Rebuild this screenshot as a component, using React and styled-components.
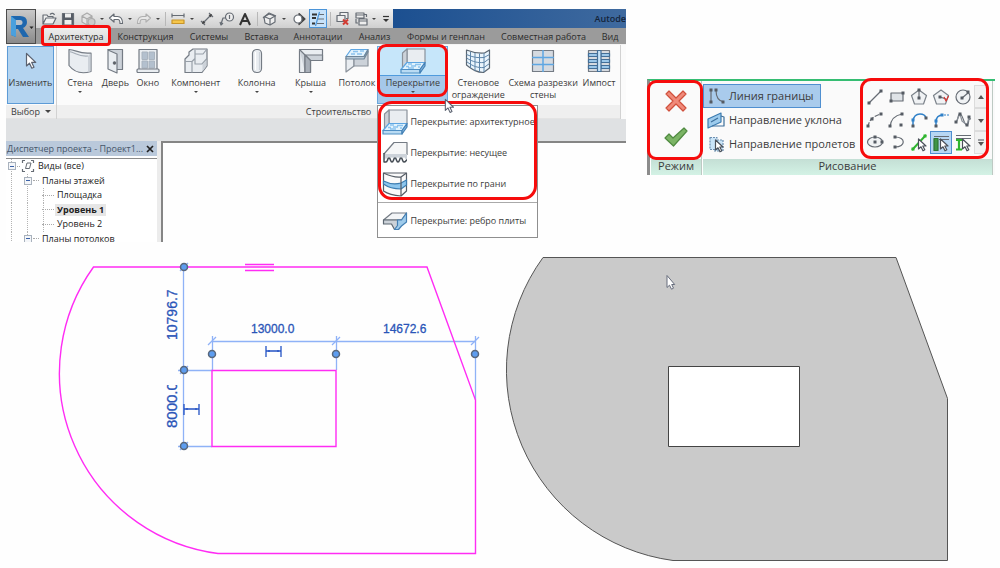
import React from "react";
import styled, { createGlobalStyle, css } from "styled-components";

const GlobalStyle = createGlobalStyle`
  * { box-sizing: border-box; }
  body { margin: 0; background: #fefefe; color: #3c3c3c; font-family: "Open Sans", "Noto Sans", sans-serif; font-size: 10px; }
  button { font: inherit; color: inherit; margin: 0; padding: 0; border: 0; background: none; }
  ul { list-style: none; margin: 0; padding: 0; }
  svg { display: block; }
`;

const Page = styled.main`
  padding-top: 9px;
  overflow: hidden;
`;
const TopRow = styled.div`
  display: grid;
  grid-template-columns: minmax(0, 620fr) minmax(0, 353fr);
  gap: 21px;
  padding-left: 6px;
  align-items: start;
`;
const Drawings = styled.div`
  display: grid;
  grid-template-columns: 1fr 1fr;
  svg { width: 100%; height: auto; }
`;

/* A hand-drawn looking frame that marks a part of the interface. */
const mark = css`
  content: "";
  position: absolute;
  z-index: 5;
  border: 3px solid #f60c0c;
  pointer-events: none;
`;

/* ---------- main window ---------- */
const Window = styled.section`
  position: relative;
`;
const Header = styled.header`
  display: grid;
  grid-template-columns: 30px minmax(0, 1fr);
`;
const AppButton = styled.button`
  display: flex;
  align-items: center;
  justify-content: center;
  border: 1px solid #4c4c4c;
  background: linear-gradient(#c9c9c9, #8a8a8a);
`;
const TitleBar = styled.div`
  display: flex;
  height: 19px;
  background: linear-gradient(90deg, #24548c, #1b4f90 60%, #3f6a9f);
`;
const QuickBar = styled.div`
  display: flex;
  flex: none;
  padding-left: 4px;
  background: linear-gradient(#f0f0f0, #cfcfcf);
`;
const QuickButton = styled.button`
  display: flex;
  align-items: center;
  justify-content: center;
  width: ${(p) => p.$w}px;
  ${(p) => p.$on && css`background: #c7e2fa; border: 1px solid #4b94d8;`}
`;
const QuickGap = styled.span`
  width: ${(p) => p.$w}px;
  background: linear-gradient(#b8b8b8, #b8b8b8) no-repeat center / 1px 14px;
`;
const AppTitle = styled.span`
  flex: 1;
  min-width: 0;
  overflow: hidden;
  text-align: right;
  font-size: 9px;
  line-height: 19px;
  font-weight: 600;
  color: #14243a;
`;
const Tabs = styled.nav`
  display: flex;
  height: 16px;
  padding-left: 6px;
  background: #9b9b9b;
`;
const Tab = styled.button`
  position: relative;
  flex: ${(p) => p.$w} 1 0;
  min-width: 0;
  white-space: nowrap;
  font-size: 9px;
  line-height: 18px;
  color: #2c2c2c;
  ${(p) => p.$on && css`
    background: linear-gradient(#ededed, #d8d8d8);
    &::after { ${mark} inset: -3px -1px -2px; border-radius: 4px; }
  `}
`;

const Ribbon = styled.div`
  display: grid;
  grid-template-columns: 51px minmax(0, 1fr);
  padding-right: 5px;
  background: #fbfbfb;
  border-top: 1px solid #f4f4f4;
`;
const Panel = styled.div`
  border-right: 1px solid #d2d2d2;
`;
const PanelBody = styled.div`
  display: flex;
  height: 60px;
  padding: 1px 0 1px ${(p) => p.$left}px;
`;
const PanelLabel = styled.div`
  display: flex;
  align-items: center;
  justify-content: center;
  gap: 5px;
  height: 14px;
  background: #efefef;
  border-bottom: 1px solid #e4e4e4;
  font-size: 9px;
`;
const ModifyButton = styled.button`
  flex: 1;
  display: flex;
  flex-direction: column;
  align-items: center;
  gap: 4px;
  margin-right: 2px;
  padding-top: 5px;
  border: 1px solid #5d9bd6;
  background: #b4d4f0;
  font-size: 9px;
  line-height: 12px;
`;
const ToolSlot = styled.div`
  position: relative;
  flex: ${(p) => p.$w} 1 0;
  min-width: 0;
  display: flex;
`;
const ToolButton = styled.button`
  flex: 1;
  min-width: 0;
  display: flex;
  flex-direction: column;
  align-items: center;
  padding-top: 2px;
  white-space: nowrap;
  font-size: 9px;
  line-height: 12px;
  ${(p) => p.$open && css`
    background: linear-gradient(#c6e6fa 0 29px, #4f9bdd 29px 30px, #a5c8ea 30px);
    box-shadow: inset 0 0 0 1px #6aa7dc;
    &::after { ${mark} inset: -2px 0 7px; border-radius: 9px; }
  `}
`;
const ToolText = styled.span`
  margin-top: 3px;
  text-align: center;
`;
const Arrow = styled.span`
  width: 0;
  border: ${(p) => p.$s || 2}px solid transparent;
  border-top-color: #444;
  border-bottom-width: 0;
`;
const ToolArrow = styled(Arrow)`
  margin-top: 2px;
`;
const Menu = styled.ul`
  position: absolute;
  z-index: 4;
  top: 59px;
  left: 0;
  width: 161px;
  padding-bottom: 1px;
  background: #fff;
  border: 1px solid #8f8f8f;
  &::after { ${mark} inset: -5px 0 37px; border-radius: 14px; }
`;
const MenuRow = styled.li`
  ${(p) => p.$split && css`border-top: 1px solid #aaa; margin-top: 3px; padding-top: 2px;`}
`;
const MenuButton = styled.button`
  display: flex;
  align-items: center;
  gap: 2px;
  width: 100%;
  height: 31px;
  padding-left: 4px;
  white-space: nowrap;
  font-size: 9px;
`;
const Pointer = styled.span`
  position: absolute;
  z-index: 6;
  left: 67px;
  top: 52px;
`;
const OptionsBar = styled.div`
  height: 22px;
  background: #dfe1e3;
`;

const Workspace = styled.div`
  display: grid;
  grid-template-columns: 151px minmax(0, 1fr);
  gap: 4px;
  max-height: 101px;
  overflow: hidden;
  background: linear-gradient(90deg, #ececec 155px, #fff 155px);
`;
const View = styled.div`
  border: solid #858585;
  border-width: 2px 0 0 2px;
  background: #fefefe;
`;
const Browser = styled.aside`
  background: #fff;
`;
const BrowserTitle = styled.div`
  display: flex;
  align-items: center;
  justify-content: space-between;
  height: 15px;
  padding: 0 3px 0 1px;
  background: #bac9db;
  color: #46566a;
  white-space: nowrap;
  font-size: 9px;
`;
const Tree = styled.ul`
  display: flex;
  flex-direction: column;
  height: 88px;
  margin-top: 2px;
  border-top: 1px solid #8a8a8a;
`;
const trunk = (x) => `repeating-linear-gradient(#b4b4b4 0 1px, transparent 1px 2px) no-repeat ${x}px 0 / 1px 100%`;
const Node = styled.li`
  flex: 1;
  display: flex;
  align-items: center;
  gap: 1px;
  padding-left: ${(p) => [2, 18, 36][p.$level]}px;
  font-size: 9px;
  line-height: 12px;
  white-space: nowrap;
  color: #222;
  background: ${(p) => [5, 21, 37].slice(0, p.$level + 1).map(trunk).join(", ")};
`;
const Toggle = styled.button`
  flex: none;
  width: 8px;
  height: 8px;
  border: 1px solid #a9b2bd;
  background: linear-gradient(#3b62a8, #3b62a8) no-repeat center / 4px 1px #f4f6f9;
`;
const Dots = styled.span`
  width: ${(p) => p.$w}px;
  border-top: 1px dotted #aaa;
`;
const NodeName = styled.span`
  padding: 0 2px;
  ${(p) => p.$on && css`background: #e6e6e6; font-weight: 700;`}
`;

/* ---------- sketch panel ---------- */
const Sketch = styled.section`
  display: grid;
  grid-template-columns: 52px minmax(0, 1fr);
  margin-top: 70px;
  margin-right: 5px;
  padding-right: 2px;
  border-top: 2px solid #35bd72;
  border-left: 3px solid #8c8c8c;
  background: #fafafa;
`;
const SketchPanel = styled.div`
  position: relative;
  min-width: 0;
  border-right: 1px solid #bdc9c3;
  ${(p) => p.$marked && css`&::after { ${mark} inset: -1px -2px 15px -3px; border-radius: 9px; }`}
`;
const SketchBody = styled.div`
  display: flex;
  height: 78px;
  justify-content: space-between;
`;
const ModeBody = styled.div`
  display: flex;
  flex-direction: column;
  align-items: center;
  justify-content: center;
  gap: 14px;
  height: 78px;
  padding-bottom: 4px;
`;
const SketchLabel = styled.div`
  height: 16px;
  border-left: 1px solid #fff;
  background: linear-gradient(#c4dfd5, #d3f2e5);
  text-align: center;
  font-size: 11px;
  line-height: 14px;
`;
const Kinds = styled.div`
  flex: 1;
  min-width: 0;
  overflow: hidden;
  padding: 3px 0 0 1px;
`;
const Kind = styled.button`
  display: flex;
  align-items: center;
  gap: 4px;
  height: 24px;
  width: ${(p) => (p.$on ? "118px" : "auto")};
  padding-left: 3px;
  white-space: nowrap;
  font-size: 11px;
  line-height: 20px;
  border: 1px solid ${(p) => (p.$on ? "#4f8fd0" : "transparent")};
  background: ${(p) => (p.$on ? "#a9cbec" : "transparent")};
`;
const Gallery = styled.div`
  position: relative;
  flex: none;
  display: grid;
  grid-template-columns: repeat(5, 22px) 13px;
  grid-template-rows: repeat(3, 23px);
  padding: 4px 5px 0 4px;
  &::after { ${mark} inset: -3px 3px 0 0; border-radius: 11px; }
`;
const Draw = styled.button`
  display: flex;
  align-items: center;
  justify-content: center;
  ${(p) => p.$on && css`background: #b7d7f3; box-shadow: inset 0 0 0 1px #4f8fd0;`}
`;
const Scroll = styled.button`
  display: flex;
  align-items: center;
  justify-content: center;
  border: 1px solid #dcdcdc;
  background: #f1f1f1;
`;

/* ---------- icons ---------- */
const Icon = ({ w = 16, h = w, vw = w, vh = h, children }) => (
  <svg width={w} height={h} viewBox={`0 0 ${vw} ${vh}`} fill="none" stroke="#666c74" strokeWidth="1.2" strokeLinejoin="round" aria-hidden="true">
    {children}
  </svg>
);
const Big = ({ children }) => <Icon w={26}>{children}</Icon>;
const LIGHT = "#e9edf1";
const MID = "#ccd2d9";
const BLUE = "#5ea6e2";
const SKY = "#c9e4f8";

const CursorIcon = ({ size = 18 }) => (
  <Icon w={(size * 2) / 3} h={size} vw={12} vh={18}>
    <path d="M1.500 1.500V14l3-2.800 2.300 5 2.200-1-2.300-4.800h4z" fill="#fff" stroke="#5b6270" />
  </Icon>
);

const FloorShape = () => (
  <>
    <path d="M7 1h18v14H7z" fill={LIGHT} stroke="#8a929b" />
    <path d="M2.500 5 7 1v14l-4.500 6z" fill={MID} stroke="#8a929b" />
    <path d="M1 21.500 7 14.500h18l-5 7z" fill="#e2f3fd" stroke={BLUE} />
    <path d="M8 16h4M15 16.500h6M6 18.500h3M11 18h5M8 20h6M18 19h2" stroke="#8cc3ee" strokeWidth="1.400" />
    <path d="M1 21.500h19V25H1z" fill="#b9dbf3" stroke="#4f8fc4" />
    <path d="m20 21.500 5-7V18l-5 7z" fill="#7fb2dc" stroke="#4580b4" />
  </>
);

const icons = {
  wall: <Big><path d="M2 1.500c7 0 10 5 22 3.500v18.500c-10 3-17 .5-22-6z" fill={LIGHT} stroke="#747b84" /><path d="M2 3.500c7 1 9 5.500 19 4.500" stroke="#a5adb6" /><path d="M21 8v16l2.500-.7V5.500z" fill={MID} stroke="none" /></Big>,
  door: <Big><path d="M5.500 1.500h15v20h-6" fill={MID} stroke="#747b84" /><path d="m6 2 9 4v19l-9-4z" fill={LIGHT} stroke="#747b84" /><circle cx="12.500" cy="15" r="1.200" fill="#555" /></Big>,
  window: <Big><rect x="4" y="1.500" width="18" height="20" fill={LIGHT} stroke="#747b84" /><path d="M7 4h5.500v7.500H7zM14 4h5.500v7.500H14zM7 13h5.500v7H7zM14 13h5.500v7H14z" fill="#b3c0ce" stroke="#aab4bf" strokeWidth="1" /><rect x="2" y="21" width="22" height="3.500" rx="1" fill={LIGHT} stroke="#747b84" /></Big>,
  component: <Big><path d="m2 11 4-4V4l4-3h14v17l-5 6.500H2z" fill={LIGHT} stroke="#747b84" /><path d="M2 13.500h7v11M9 13.500l3-3M12 6v10h7l5-5.500M12 6h8l4-5M12 6V2" stroke="#98a0a9" /><path d="m19.500 16 4-4v6l-4 5.500z" fill={MID} stroke="none" /></Big>,
  column: <Big><rect x="8.500" y="1.500" width="9" height="23" rx="4" fill={LIGHT} stroke="#747b84" /><path d="M11.500 4v18" stroke="#fff" /><path d="M15.500 4v18" stroke={MID} /></Big>,
  roof: <Big><path d="M1.500 1.500h23v11h-12v12h-11z" fill={LIGHT} stroke="#747b84" /><path d="m1.500 1.500 5.500 5.500h17.500v5.500h-12L7 7v17.500" fill={MID} stroke="#747b84" /><path d="m7 7 5.500 5.500v12H7z" fill="#a9b0b9" stroke="#747b84" /></Big>,
  ceiling: <Big><path d="M2 10v14l8-6V10z" fill={LIGHT} stroke="#8a929b" /><path d="M10 10v8h14V3z" fill={MID} stroke="#8a929b" /><path d="M2 8.500 7 1.500h17l-4 7z" fill="#e2f3fd" stroke={BLUE} /><path d="M9 3.500h5M16 3h4M7 6h4M13 6h5" stroke="#8cc3ee" strokeWidth="1.400" /><path d="M2 8.500V11h18l4-7V1.500l-4 7z" fill="#b7c8d6" stroke="#6f8699" /></Big>,
  floor: <Big><FloorShape /></Big>,
  curtain: <Big><path d="M1.500 2c6 2.500 12 3.500 18 3l5-3v18l-6 4.500C12 24.500 8 22 1.500 17z" fill="#eaf5fd" stroke="#5b6773" /><path d="M5.500 4v16M10 5v18M14.500 5.500v18.500M19 5v19M1.500 6.500C8 9.500 13 10 19 9.500l5.500-3M1.500 10C8 14 13 15 19 14.500l5.500-4M1.500 13.500C8 18.500 13 20 19 19.500l5.500-4" stroke="#5f86aa" strokeWidth="1" /></Big>,
  grid: <Big><rect x="2.500" y="2.500" width="21" height="21" fill="#d5dae0" stroke="#747b84" /><path d="M13 2v22M2 9.500h22M2 16.500h22" stroke={BLUE} strokeWidth="1.500" /></Big>,
  mullion: <Big><path d="M2.500 2.500h21v21h-21z" fill="#d5dae0" stroke="#747b84" /><path d="M2.500 5.500h9v3h-9zM15 5.500h8.500v3H15zM2.500 11.500h9v3h-9zM15 11.500h8.500v3H15zM2.500 17.500h9v3h-9zM15 17.500h8.500v3H15z" fill="#9cc8ea" stroke="#436f98" /><path d="M11.500 2.500h3.500v21h-3.500z" fill={SKY} stroke="#436f98" /></Big>,
  structural: <Icon w={26}><path d="M2 14 12 2.500h13V15" fill="#f5f6f7" stroke="#747b84" /><path d="M2 14h23v7l-3-4-3 4-3-4-3 4-3-4-3 4-3-3-2 3z" fill={MID} stroke="none" /><path d="M2 13v9h2c2 0 1-4 3-4s1 4 3 4 1-4 3-4 1 4 3 4 1-4 3-4 1 4 3 4 2-2 3-2" stroke="#434a52" strokeWidth="1.400" /></Icon>,
  face: <Icon w={26}><path d="M1.500 2H24.500v18L19 25C12 24.500 6 23 1.500 20z" fill="#fafafa" stroke="#565d66" /><path d="M1.500 10c6 3 12 3.500 17.500 2l5.500-3v5l-5.500 4c-7 0-12-1-17.500-5z" fill="#8dc6ee" stroke="#3c7cb0" /><path d="M1.500 2c6 3 12 4.500 17.500 4l5.500-4M19 6v19" stroke="#565d66" /></Icon>,
  edge: <Icon w={26}><path d="M1.500 12 10 5h14.500l-5 7z" fill="#f3f5f7" stroke="#747b84" /><path d="M1.500 12v4h8l3 5.500h4V17l3-5z" fill={MID} stroke="#5d6872" /><path d="m19.500 12 5-7v9l-5 4-3 3.500h-4l3-4V12z" fill="#9fcbeb" stroke="#4580b4" /></Icon>,

  open: <Icon w={16}><path d="M2 13V4h4l1 1.500h5V7M2 13l3-6h10l-3 6z" fill="#f1f1f1" /><path d="M9 3.500c2-2 4-1 4.500.5" /></Icon>,
  save: <Icon w={14}><path d="M1.500 1.500h11v11h-11z" fill="#565c65" /><path d="M4 1.500h6v4H4zM3.500 8h7v4.500h-7z" fill="#eee" stroke="none" /></Icon>,
  cloud: <Icon w={16}><g stroke="#aaa"><path d="m2 5 5-3 5 3v6l-5 3-5-3zM2 5l5 3 5-3M7 8v6" fill="#e4e4e4" /><circle cx="11.500" cy="11" r="3.500" fill="#ccc" /></g></Icon>,
  undo: <Icon w={16}><path d="M6 3 1.500 7 6 11V8.500h4q2 0 2 4h2.500q0-7-5-7H6z" fill="#fff" /></Icon>,
  redo: <Icon w={16}><path d="M10 3l4.500 4L10 11V8.500H6q-2 0-2 4H1.500q0-7 5-7H10z" fill="#e8e8e8" stroke="#b0b0b0" /></Icon>,
  measure: <Icon w={16}><path d="M2 4.500h12M2 2.500v4M14 2.500v4" /><path d="M2 9h12v3.500H2z" fill="#f5c64b" stroke="#c8952a" /></Icon>,
  align: <Icon w={16}><path d="m3.500 12.500 9-9M2 10l4 4M10 2l4 4" /><path d="M3 13l3.500-1-2.500-2.500zM13 3l-3.500 1L12 6.500z" fill="#444" stroke="none" /></Icon>,
  tag: <Icon w={16}><circle cx="10.500" cy="6" r="4" fill="#eee" /><path d="M10.500 4v4M6.500 7H4l-2 6" /><path d="m1 11 1 3 2-2" /></Icon>,
  textA: <Icon w={14}><path d="M2 13 7 2l5 11M4 9h6" stroke="#333" strokeWidth="2" /></Icon>,
  home3d: <Icon w={16}><path d="m2 6 5-3 6 2v6l-5 3-5-2z" fill="#eee" /><path d="m1 7 6-5 7 3M8 14V8l5-3M3 6l5 2" /></Icon>,
  section: <Icon w={16}><path d="m8 2.500 6 5.500-6 5.500z" fill="#444" stroke="#444" /><circle cx="7" cy="8" r="4" fill="#fff" /></Icon>,
  thin: <Icon w={16}><path d="M2 3.500h5M2 7h4M2 12.500h3" stroke="#333" strokeWidth="2.200" /><path d="M9 3.500h5M8 8h6M7 12.500h7" /><path d="M9.500 1 5.500 15" stroke="#4b94d8" /></Icon>,
  closeHidden: <Icon w={16}><path d="M5 4V1.500h8v6h-2M2 4.500h8v6H2z" fill="#eee" /><path d="m8 8.500 5 5M13 8.500l-5 5" stroke="#d23b32" strokeWidth="2" /></Icon>,
  switchWin: <Icon w={16}><path d="M3 2h8v5H3zM6 8h8v6H6z" fill="#eee" /><path d="M11 3.500h2.500V6M3 8v4h2M3 4h8M6 10h8" /></Icon>,
};

const dot = (x, y, c = "#555b63") => <rect x={x - 1.5} y={y - 1.5} width="3" height="3" fill={c} stroke="none" />;
const cursorMini = <path d="M8.500 5v10l2.500-2.200 2 4 1.800-1-2-3.800H16z" fill="#fff" stroke="#4b515a" />;
const draws = [
  ["Линия", <Icon w={18}><path d="M3 15 15 3" />{dot(3, 15)}{dot(15, 3)}</Icon>],
  ["Прямоугольник", <Icon w={18}><rect x="3" y="5" width="12" height="8" fill="#dfe3e7" />{dot(3, 13)}{dot(15, 5)}</Icon>],
  ["Вписанный многоугольник", <Icon w={18}><path d="m9 2 7.500 5.500-3 8.500h-9l-3-8.500z" fill="#f0f2f4" stroke="#7b828a" /><path d="M9 2v8" />{dot(9, 2)}{dot(9, 10)}</Icon>],
  ["Описанный многоугольник", <Icon w={18}><path d="m9 2 7.500 5.500-3 8.500h-9l-3-8.500z" fill="#f0f2f4" stroke="#7b828a" /><path d="m8 9 6 2" />{dot(8, 9)}<path d="m12 9 2 4 2.500-5" stroke="#d8322c" /></Icon>],
  ["Окружность", <Icon w={18}><circle cx="9" cy="9" r="7" fill="#f0f2f4" /><path d="m8 10 6-5" />{dot(8, 10)}{dot(14, 4)}</Icon>],
  ["Дуга по трем точкам", <Icon w={18}><path d="M2 16Q3 6 15 3" strokeDasharray="5 1.500" />{dot(2, 15)}{dot(6, 8)}{dot(15, 3)}</Icon>],
  ["Дуга из центра", <Icon w={18}><path d="M2 16Q3 5 14 3" />{dot(2, 15)}{dot(14, 3)}{dot(13, 14)}</Icon>],
  ["Касательная дуга", <Icon w={18}><path d="M3 15V10Q4 3 10 3q5 0 6 4" stroke="#2f80c8" strokeWidth="1.500" />{dot(3, 15)}{dot(3, 9, "#2f80c8")}{dot(16, 7)}</Icon>],
  ["Сопряжение", <Icon w={18}><path d="M4 16v-5q0-7 7-7" stroke="#2f80c8" strokeWidth="1.500" /><path d="M12 4h5" stroke="#2f80c8" strokeDasharray="2 1" />{dot(4, 15)}{dot(4, 10, "#2f80c8")}{dot(10, 4, "#2f80c8")}</Icon>],
  ["Сплайн", <Icon w={18}><path d="M1 11C5 11 3 3 6 3s4 12 7 11 0-7 4-6" /><path d="m3 9 3-6 2 7 5 4 2-8" stroke="#8b9199" />{dot(6, 3)}{dot(13, 14)}{dot(15, 6)}{dot(2, 11)}</Icon>],
  ["Эллипс", <Icon w={18}><ellipse cx="9" cy="8" rx="7.500" ry="5" fill="#f0f2f4" />{dot(9, 8)}{dot(9, 3)}{dot(16, 8)}</Icon>],
  ["Часть эллипса", <Icon w={18}><path d="M7 3c11 0 11 10 0 10" />{dot(7, 3)}{dot(7, 13)}</Icon>],
  ["Выбрать линии", <Icon w={18}><path d="M2 16 16 1" stroke="#2fb52f" strokeWidth="2" />{dot(3, 15, "#2fb52f")}{dot(15, 2, "#2fb52f")}{cursorMini}</Icon>],
  ["Выбрать стены", <Icon w={18}><path d="M2 2.500h15M7 5.500h10" /><path d="M2 4.500h4v12H2z" fill="#3f9647" stroke="#2f7636" />{cursorMini}</Icon>],
  ["Выбрать опоры", <Icon w={18}><path d="M2 1.500h15M2 4.500h15" /><path d="M2 6h6M2 15.500h6M5 6v9" stroke="#2fb52f" strokeWidth="2.200" />{cursorMini}</Icon>],
];

const quick = [
  ["b", 18, "open", "Открыть"], ["b", 20, "save", "Сохранить"], ["b", 20, "cloud", "Синхронизация"], ["a", 8],
  ["b", 20, "undo", "Отменить"], ["a", 8], ["b", 20, "redo", "Повторить"], ["a", 8], ["s", 6],
  ["b", 20, "measure", "Измерить"], ["a", 8], ["b", 21, "align", "Размер"], ["b", 19, "tag", "Марка"], ["b", 18, "textA", "Текст"], ["s", 6],
  ["b", 20, "home3d", "3D вид"], ["a", 8], ["b", 21, "section", "Разрез"], ["b", 18, "thin", "Тонкие линии", true], ["s", 6],
  ["b", 19, "closeHidden", "Закрыть скрытые окна"], ["b", 18, "switchWin", "Переключить окна"], ["a", 8], ["c", 15],
];

const tabs = [
  ["Архитектура", 68], ["Конструкция", 71], ["Системы", 56], ["Вставка", 49], ["Аннотации", 64],
  ["Анализ", 49], ["Формы и генплан", 94], ["Совместная работа", 101], ["Вид", 32],
];

const tools = [
  ["Стена", 36, "wall", true], ["Дверь", 35, "door"], ["Окно", 30, "window"], ["Компонент", 66, "component", true],
  ["Колонна", 56, "column", true], ["Крыша", 52, "roof", true], ["Потолок", 41, "ceiling"], ["Перекрытие", 71, "floor", true],
  ["Стеновое\nограждение", 60, "curtain"], ["Схема разрезки\nстены", 70, "grid"], ["Импост", 42, "mullion"],
];

const menu = [
  ["Перекрытие: архитектурное", "floor"], ["Перекрытие: несущее", "structural"],
  ["Перекрытие по грани", "face"], ["Перекрытие: ребро плиты", "edge", true],
];

function QuickItem({ item: [kind, w, icon, label, on] }) {
  if (kind === "s") return <QuickGap $w={w} />;
  if (kind === "a") return <QuickButton $w={w} aria-label="Список"><Arrow /></QuickButton>;
  if (kind === "c")
    return <QuickButton $w={w} aria-label="Настройка панели"><Icon w={8}><path d="M1 1.500h6" stroke="#333" /><path d="M1 4h6L4 7z" fill="#333" stroke="none" /></Icon></QuickButton>;
  return <QuickButton $w={w} $on={on} aria-label={label}>{icons[icon]}</QuickButton>;
}

function FloorMenu() {
  return (
    <Menu>
      {menu.map(([name, icon, split]) => (
        <MenuRow key={name} $split={split}><MenuButton>{icons[icon]}{name}</MenuButton></MenuRow>
      ))}
    </Menu>
  );
}

function ProjectBrowser() {
  return (
    <Browser>
      <BrowserTitle>
        Диспетчер проекта - Проект1...
        <button aria-label="Закрыть"><Icon w={8}><path d="m1 1 6 6M7 1 1 7" stroke="#222" strokeWidth="1.700" /></Icon></button>
      </BrowserTitle>
      <Tree>
        <Node $level={0}><Toggle aria-label="Свернуть" /><Dots $w={3} /><Icon w={14}><path d="M4 1.500H1.500V4M10 1.500h2.500V4M4 12.500H1.500V10M10 12.500h2.500V10" /><path d="M6 4h4l-1.500 5.500H4.500z" strokeWidth="1" /></Icon><NodeName>Виды (все)</NodeName></Node>
        <Node $level={1}><Toggle aria-label="Свернуть" /><Dots $w={6} /><NodeName>Планы этажей</NodeName></Node>
        <Node $level={2}><Dots $w={12} /><NodeName>Площадка</NodeName></Node>
        <Node $level={2}><Dots $w={12} /><NodeName $on>Уровень 1</NodeName></Node>
        <Node $level={2}><Dots $w={12} /><NodeName>Уровень 2</NodeName></Node>
        <Node $level={1}><Toggle aria-label="Свернуть" /><Dots $w={6} /><NodeName>Планы потолков</NodeName></Node>
      </Tree>
    </Browser>
  );
}

function MainWindow() {
  return (
    <Window>
      <Header>
        <AppButton aria-label="Меню приложения">
          <Icon w={28} h={30}>
            <path d="M4 4h9q7 0 7 6 0 4-4 6l6 9h-6l-5-8H9v8l-5-2z" fill="#1e67ae" stroke="none" />
            <path d="M9 8h4q2.500 0 2.500 2.500T13 13H9z" fill="#b9c0c8" stroke="none" />
            <path d="m4 4 5 4v17l-5-2z" fill="#4aa0dd" stroke="none" />
            <path d="M22.500 14.500h4l-2 2.500z" fill="#222" stroke="none" />
          </Icon>
        </AppButton>
        <div>
          <TitleBar>
            <QuickBar>{quick.map((q, i) => <QuickItem key={i} item={q} />)}</QuickBar>
            <AppTitle>Autode</AppTitle>
          </TitleBar>
          <Tabs>{tabs.map(([name, w], i) => <Tab key={name} $w={w} $on={i === 0}>{name}</Tab>)}</Tabs>
        </div>
      </Header>
      <Ribbon>
        <Panel>
          <PanelBody $left={1}><ModifyButton><CursorIcon /><ToolText>Изменить</ToolText></ModifyButton></PanelBody>
          <PanelLabel>Выбор <Arrow $s={3} /></PanelLabel>
        </Panel>
        <Panel>
          <PanelBody $left={5}>
            {tools.map(([name, w, icon, drop]) => {
              const open = icon === "floor";
              return (
                <ToolSlot key={name} $w={w}>
                  <ToolButton $open={open}>
                    {icons[icon]}
                    <ToolText>{name.split("\n").map((line) => <div key={line}>{line}</div>)}</ToolText>
                    {drop && <ToolArrow />}
                  </ToolButton>
                  {open && <><FloorMenu /><Pointer><CursorIcon size={16} /></Pointer></>}
                </ToolSlot>
              );
            })}
          </PanelBody>
          <PanelLabel>Строительство</PanelLabel>
        </Panel>
      </Ribbon>
      <OptionsBar />
      <Workspace><ProjectBrowser /><View /></Workspace>
    </Window>
  );
}

function SketchTools() {
  return (
    <Sketch>
      <SketchPanel $marked>
        <ModeBody>
          <button aria-label="Отменить"><Icon w={24}><path d="m2 5 3-3 7 7 7-7 3 3-7 7 7 7-3 3-7-7-7 7-3-3 7-7z" fill="#f08a7a" stroke="#d0503c" /></Icon></button>
          <button aria-label="Принять"><Icon w={24} h={20}><path d="m1 11 4-4 4 4L20 1l3 3L9.500 19z" fill="#7bb465" stroke="#4f8a40" /></Icon></button>
        </ModeBody>
        <SketchLabel>Режим</SketchLabel>
      </SketchPanel>
      <SketchPanel>
        <SketchBody>
          <Kinds>
            <Kind $on><Icon w={18}><path d="M4 3v12M9 3q0 11 8 12" />{dot(4, 3)}{dot(4, 15)}{dot(9, 3)}{dot(16, 15)}</Icon>Линия границы</Kind>
            <Kind><Icon w={18}><path d="m1 8 13-6v9L1 17z" fill="#9ccbed" stroke="#3c7cb0" /><path d="m4 11 7-4M14 5l3 1v9H5" stroke="#3c6f9b" /></Icon>Направление уклона</Kind>
            <Kind><Icon w={18}><path d="M3 2.500h7v12H3zM10 5h6v11H7" fill={SKY} stroke="#6d8fb0" strokeDasharray="2 1" />{cursorMini}</Icon>Направление пролетов</Kind>
          </Kinds>
          <Gallery>
            {draws.map(([name, icon], i) => (
              <React.Fragment key={name}>
                <Draw aria-label={name} $on={i === 13}>{icon}</Draw>
                {i % 5 === 4 && (
                  <Scroll aria-label={["Вверх", "Вниз", "Развернуть"][(i - 4) / 5]}>
                    <Icon w={8}>
                      <path d={i === 4 ? "M1 6h6L4 2z" : "M1 3h6L4 7z"} fill="#555" stroke="none" />
                      {i === 14 && <path d="M1 1h6" />}
                    </Icon>
                  </Scroll>
                )}
              </React.Fragment>
            ))}
          </Gallery>
        </SketchBody>
        <SketchLabel>Рисование</SketchLabel>
      </SketchPanel>
    </Sketch>
  );
}

const Tick = ({ x, y }) => <path d={`M${x - 4} ${y + 4}l8-8`} />;
const Grip = ({ x, y }) => <circle cx={x} cy={y} r="3.500" fill="#5d9df0" stroke="#58677c" strokeWidth="1.500" />;
const Lock = ({ x, y }) => <path d={`M${x} ${y - 5}v11M${x + 15} ${y - 5}v11M${x} ${y}h15M${x + 3} ${y - 1}v2M${x + 12} ${y - 1}v2`} stroke="#2453c4" strokeWidth="1.300" />;

function BoundarySketch() {
  return (
    <svg viewBox="0 242 500 326" fill="none" role="img" aria-label="Эскиз границы перекрытия">
      <g stroke="#8fb2f7" strokeWidth="1.300">
        <path d="M183.500 267v180M178 370.500h34M178 446.500h34M212 341.500h264M212.500 336v34M336.500 336v34M475.500 336v64" />
        <Tick x={212} y={341} /><Tick x={336} y={341} /><Tick x={475} y={341} /><Tick x={184} y={267} /><Tick x={184} y={370} /><Tick x={184} y={446} />
      </g>
      <g stroke="#ff2cf4" strokeWidth="1.400">
        <path d="M93.500 267H427l48.500 133v153.500H218A182 182 0 0 1 93.500 267z" />
        <path d="M212 370.500h124v76H212zM245 264.500h29M245 270.500h29" />
      </g>
      <Grip x={184} y={267} /><Grip x={184} y={370} /><Grip x={184} y={446} />
      <Grip x={212} y={354} /><Grip x={336} y={354} /><Grip x={475} y={354} />
      <Lock x={266} y={351} /><Lock x={184} y={409} />
      <clipPath id="cut"><rect x="160" y="385" width="22" height="50" /></clipPath>
      <g fill="#2a55b8" stroke="#2a55b8" strokeWidth="0.300" fontFamily="Liberation Sans, sans-serif" fontSize="12">
        <text x="251" y="333">13000.0</text>
        <text x="383" y="333">14672.6</text>
        <text transform="translate(177 340) rotate(-90)" fontSize="14">10796.7</text>
        <g clipPath="url(#cut)"><text transform="translate(177 428) rotate(-90)" fontSize="15">8000.0</text></g>
      </g>
    </svg>
  );
}

function FinishedFloor() {
  return (
    <svg viewBox="500 242 500 326" fill="none" role="img" aria-label="Готовое перекрытие">
      <path d="M543 257.500H896l51.500 141v162H673A192 192 0 0 1 543 257.500z" fill="#cacaca" stroke="#555" />
      <path d="M668.500 366.500h131v80h-131z" fill="#fff" stroke="#444" />
      <path d="M667 275.500v12l2.500-2.300 2 4 2-1-1.800-3.700h3z" fill="#fff" stroke="#666c7c" />
    </svg>
  );
}

export default function App() {
  return (
    <Page>
      <GlobalStyle />
      <TopRow><MainWindow /><SketchTools /></TopRow>
      <Drawings><BoundarySketch /><FinishedFloor /></Drawings>
    </Page>
  );
}
